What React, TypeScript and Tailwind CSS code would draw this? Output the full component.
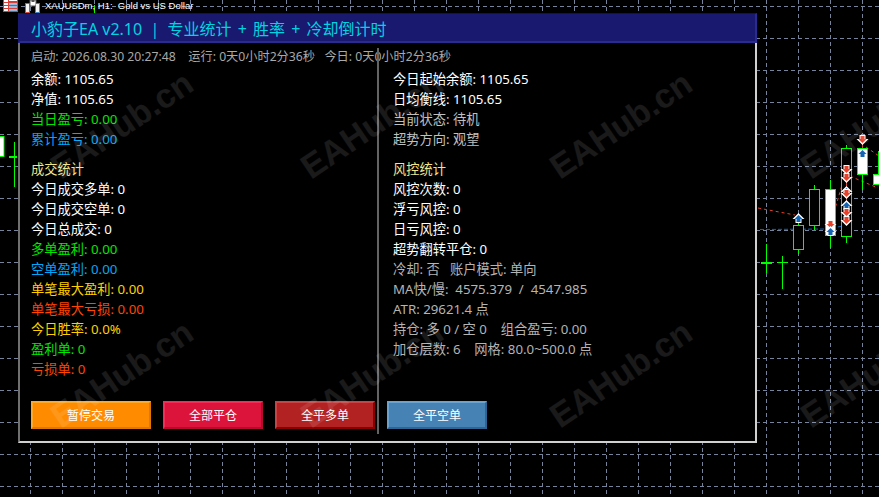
const FONT = "font-['Noto_Sans','Noto_Sans_CJK_SC',sans-serif]";

type Row = { text: string; color: string; gap?: boolean };

const LEFT_ROWS: Row[] = [
  { text: "余额: 1105.65", color: "text-white" },
  { text: "净值: 1105.65", color: "text-white" },
  { text: "当日盈亏: 0.00", color: "text-[#00e800]" },
  { text: "累计盈亏: 0.00", color: "text-[#00a8f8]" },
  { text: "成交统计", color: "text-[#f0e68c]", gap: true },
  { text: "今日成交多单: 0", color: "text-white" },
  { text: "今日成交空单: 0", color: "text-white" },
  { text: "今日总成交: 0", color: "text-white" },
  { text: "多单盈利: 0.00", color: "text-[#00e800]" },
  { text: "空单盈利: 0.00", color: "text-[#00a8f8]" },
  { text: "单笔最大盈利: 0.00", color: "text-[#ffd000]" },
  { text: "单笔最大亏损: 0.00", color: "text-[#ff4500]" },
  { text: "今日胜率: 0.0%", color: "text-[#ffd000]" },
  { text: "盈利单: 0", color: "text-[#00e800]" },
  { text: "亏损单: 0", color: "text-[#ff4500]" },
];

const RIGHT_ROWS: Row[] = [
  { text: "今日起始余额: 1105.65", color: "text-white" },
  { text: "日均衡线: 1105.65", color: "text-white" },
  { text: "当前状态: 待机", color: "text-[#c0c0c0]" },
  { text: "超势方向: 观望", color: "text-[#c0c0c0]" },
  { text: "风控统计", color: "text-[#f0e68c]", gap: true },
  { text: "风控次数: 0", color: "text-white" },
  { text: "浮亏风控: 0", color: "text-white" },
  { text: "日亏风控: 0", color: "text-white" },
  { text: "超势翻转平仓: 0", color: "text-white" },
  { text: "冷却: 否   账户模式: 单向", color: "text-[#b4b4b4]" },
  { text: "MA快/慢:  4575.379  /  4547.985", color: "text-[#b4b4b4]" },
  { text: "ATR: 29621.4 点", color: "text-[#b4b4b4]" },
  { text: "持仓: 多 0 / 空 0    组合盈亏: 0.00", color: "text-[#b4b4b4]" },
  { text: "加仓层数: 6    网格: 80.0~500.0 点", color: "text-[#b4b4b4]" },
];

const BUTTONS = [
  { label: "暂停交易", className: "w-[120px] bg-[#ff8c00] border-t-[#ffa726] border-l-[#ffa726] border-r-[#e07800] border-b-[#e07800]" },
  { label: "全部平仓", className: "w-[100px] bg-[#dc143c] border-t-[#f52c55] border-l-[#f52c55] border-r-[#b80a2c] border-b-[#b80a2c]" },
  { label: "全平多单", className: "w-[100px] bg-[#b22222] border-t-[#c84444] border-l-[#c84444] border-r-[#8b0000] border-b-[#8b0000]" },
  { label: "全平空单", className: "w-[100px] bg-[#4682b4] border-t-[#6ba3d0] border-l-[#6ba3d0] border-r-[#2f6594] border-b-[#2f6594]" },
];

const WATERMARKS = [
  "left-[61px] top-[151px]",
  "left-[311px] top-[151px]",
  "left-[560px] top-[151px]",
  "left-[811px] top-[151px]",
  "left-[61px] top-[400px]",
  "left-[311px] top-[400px]",
  "left-[560px] top-[400px]",
  "left-[811px] top-[400px]",
];

const GRID_X = Array.from({ length: 27 }, (_, i) => 30.5 + i * 32);
const GRID_Y = Array.from({ length: 16 }, (_, i) => 6.5 + i * 32);

function Candle({ x, top, bottom, wickTop, wickBottom, filled }: { x: number; top: number; bottom: number; wickTop: number; wickBottom: number; filled?: boolean }) {
  return (
    <g stroke="#00ff00" strokeWidth="1">
      <line x1={x} x2={x} y1={wickTop} y2={wickBottom} />
      <rect x={x - 5} y={top} width="10" height={bottom - top} fill={filled ? "#ffffff" : "#000000"} />
    </g>
  );
}

function BuyMark({ x, y, outline = true }: { x: number; y: number; outline?: boolean }) {
  return (
    <g>
      {outline && <path d={`M${x} ${y - 6} L${x + 6} ${y} L${x + 3} ${y} L${x + 3} ${y + 4} L${x - 3} ${y + 4} L${x - 3} ${y} L${x - 6} ${y} Z`} fill="#ffffff" />}
      <path d={`M${x} ${y - 4} L${x + 4} ${y} L${x + 2} ${y} L${x + 2} ${y + 3} L${x - 2} ${y + 3} L${x - 2} ${y} L${x - 4} ${y} Z`} fill="#1464b4" />
    </g>
  );
}

function SellMark({ x, y }: { x: number; y: number }) {
  return (
    <g>
      <path d={`M${x} ${y + 6} L${x + 6} ${y} L${x + 3} ${y} L${x + 3} ${y - 4} L${x - 3} ${y - 4} L${x - 3} ${y} L${x - 6} ${y} Z`} fill="#ffffff" />
      <path d={`M${x} ${y + 4} L${x + 4} ${y} L${x + 2} ${y} L${x + 2} ${y - 3} L${x - 2} ${y - 3} L${x - 2} ${y} L${x - 4} ${y} Z`} fill="#e8402a" />
    </g>
  );
}

function Chart() {
  return (
    <svg className="absolute inset-0" width="879" height="497" viewBox="0 0 879 497">
      <g stroke="#76839c" strokeWidth="1" strokeDasharray="4 3">
        {GRID_X.map((x) => (
          <line key={x} x1={x} x2={x} y1="0" y2="497" />
        ))}
        {GRID_Y.map((y) => (
          <line key={y} x1="0" x2="879" y1={y} y2={y} />
        ))}
      </g>

      {/* candles left of the panel */}
      <rect x="-6" y="136.5" width="10" height="20" fill="#ffffff" stroke="#00ff00" />
      <line x1="14.5" x2="14.5" y1="142" y2="187" stroke="#00ff00" />
      <line x1="9" x2="17" y1="157" y2="157" stroke="#00ff00" strokeWidth="2" />
      <line x1="94.5" x2="94.5" y1="5" y2="13" stroke="#00ff00" />

      {/* moving averages */}
      <path d="M758 208 L795 215 M831 224 L834 212 L840 192 L846 172 L852 177 L878 188 M866 147 L879 156" fill="none" stroke="#e8402a" strokeWidth="1" strokeDasharray="3 3" />
      <path d="M760 229.5 L827 229 L843 226" fill="none" stroke="#1464b4" strokeWidth="1" strokeDasharray="4 2" />

      {/* candles right of the panel */}
      <line x1="766.5" x2="766.5" y1="244" y2="273" stroke="#00ff00" />
      <line x1="761" x2="772" y1="263" y2="263" stroke="#00ff00" strokeWidth="2" />
      <line x1="782.5" x2="782.5" y1="256" y2="289" stroke="#00ff00" />
      <line x1="777" x2="788" y1="262.5" y2="262.5" stroke="#00ff00" />
      <Candle x={798.5} top={225.5} bottom={249.5} wickTop={220} wickBottom={254} />
      <Candle x={814.5} top={189.5} bottom={225.5} wickTop={185} wickBottom={230} />
      <Candle x={830.5} top={189.5} bottom={235.5} wickTop={180} wickBottom={248} filled />
      <Candle x={846.5} top={148.5} bottom={236.5} wickTop={145} wickBottom={243} />
      <Candle x={862.5} top={148.5} bottom={174.5} wickTop={146} wickBottom={190} filled />
      <rect x="873.5" y="174.5" width="10" height="10" fill="#ffffff" stroke="#00ff00" />
      <line x1="878.5" x2="878.5" y1="151" y2="174" stroke="#00ff00" />
      <line x1="846.5" x2="846.5" y1="170" y2="222" stroke="#e8402a" />
      <line x1="862.5" x2="862.5" y1="142" y2="148" stroke="#e8402a" />

      <BuyMark x={798.5} y={219} />
      <SellMark x={830.5} y={224} />
      <BuyMark x={830.5} y={232} />
      <SellMark x={846.5} y={169} />
      <SellMark x={846.5} y={177} />
      <BuyMark x={846.5} y={192} />
      <SellMark x={846.5} y={193} />
      <BuyMark x={846.5} y={206} />
      <SellMark x={846.5} y={212} />
      <SellMark x={846.5} y={220} />
      <SellMark x={862.5} y={139} />
      <BuyMark x={862.5} y={154} outline={false} />
    </svg>
  );
}

function WindowIcons() {
  return (
    <div className="flex items-start gap-2">
      <svg width="15" height="12" viewBox="0 0 15 12" className="ml-[3px]">
        <rect x="0.5" y="-1" width="14" height="12.5" fill="#ffffff" stroke="#d8413a" />
        <path d="M1 2.5H14M1 5.5H14M1 8.5H14" stroke="#d8413a" />
        <path d="M5.5 0V11" stroke="#d8413a" />
        <path d="M6 1.5H14M6 4H14M6 7H14M6 10H14" stroke="#2f74c0" />
      </svg>
      <svg width="16" height="13" viewBox="0 0 16 13" className="-ml-px">
        <rect x="0" y="3" width="5" height="10" fill="#e0483c" />
        <rect x="10" y="3" width="5" height="10" fill="#3f86c8" />
        <rect x="5" y="0" width="6" height="6" fill="#ffffff" stroke="#555555" />
        <rect x="6.5" y="0" width="3" height="2" fill="#555555" />
        <rect x="1" y="4" width="3" height="8" fill="#f4f4f4" />
        <rect x="11" y="4" width="3" height="8" fill="#f4f4f4" />
      </svg>
    </div>
  );
}

function StatColumn({ rows, className }: { rows: Row[]; className: string }) {
  return (
    <div className={`flex flex-col ${className}`}>
      {rows.map((row) => (
        <div key={row.text} className={`flex h-5 items-center whitespace-pre ${row.gap ? "mt-2.5" : ""} ${row.color}`}>
          {row.text}
        </div>
      ))}
    </div>
  );
}

export default function App() {
  return (
    <div className={`relative h-[497px] w-[879px] overflow-hidden bg-black ${FONT}`}>
      <Chart />

      <div className="absolute left-0 top-0 flex items-start">
        <WindowIcons />
        <span className="ml-[4px] whitespace-pre font-['Liberation_Sans',sans-serif] text-[9.5px] leading-[12px] text-white">XAUUSDm, H1:  Gold vs US Dollar</span>
      </div>

      {/* stats panel */}
      <div className="absolute left-[18px] top-[13px] flex h-[430px] w-[739px] flex-col text-[13.25px]">
        <div className="flex h-[30px] items-center border-x-2 border-b-2 border-t border-x-[#2a2a90] border-b-[#2a2a90] border-t-[#10105c] border-l-[#191970] bg-[#191970] pl-[11px] pt-[3px] text-[16px] text-[#00d4e0]">
          <span className="whitespace-pre">小豹子EA v2.10  |  </span>
          <span className="whitespace-pre [word-spacing:2px]">专业统计 + 胜率 + 冷却倒计时</span>
        </div>
        <div className="relative flex flex-1 flex-col border-b-2 border-l-2 border-r-2 border-b-[#d0d0d0] border-l-[#707070] border-r-[#d0d0d0] bg-black">
          <div className="mt-[4px] flex h-5 items-center whitespace-pre pl-[11px] text-[12.2px] text-[#a9a9a9]">启动: 2026.08.30 20:27:48    运行: 0天0小时2分36秒   今日: 0天0小时2分36秒</div>
          <div className="mt-[3px] flex">
            <StatColumn rows={LEFT_ROWS} className="w-[358px] pl-[11px]" />
            <StatColumn rows={RIGHT_ROWS} className="flex-1 pl-[15px]" />
          </div>
          <div className="mt-[21px] flex gap-3 pl-[11px]">
            {BUTTONS.map((btn) => (
              <div key={btn.label} className={`flex h-7 items-center justify-center border-2 pt-px text-[12px] text-white ${btn.className}`}>
                {btn.label}
              </div>
            ))}
          </div>
          <div className="absolute bottom-[7px] left-[357px] top-[5px] w-0.5 bg-[#646464]" />
        </div>
      </div>

      {/* EAHub watermark */}
      {WATERMARKS.map((pos) => (
        <div
          key={pos}
          className={`pointer-events-none absolute origin-[0_29px] -rotate-[34deg] whitespace-pre font-['Liberation_Sans',sans-serif] text-[34px] font-bold leading-[34px] text-white/10 ${pos}`}
        >
          EAHub.cn
        </div>
      ))}
    </div>
  );
}
